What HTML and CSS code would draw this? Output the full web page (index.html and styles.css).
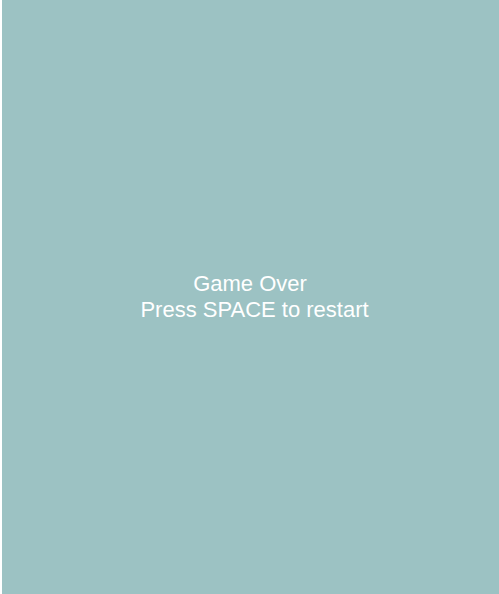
FILE: index.html
```html
<!DOCTYPE html>
<html>
<head>
<meta charset="utf-8">
<link rel="stylesheet" href="styles.css">
</head>
<body>
<div class="game">
  <div class="message">
    <div class="line line-title">Game Over</div>
    <div class="line">Press SPACE to restart</div>
  </div>
</div>
</body>
</html>
```
FILE: styles.css
```css
html, body {
  margin: 0;
  padding: 0;
  background: #ffffff;
  overflow: hidden;
}
.game {
  margin-left: 2px;
  width: 497px;
  height: 594px;
  background: #9cc2c3;
  box-sizing: border-box;
  padding-top: 271px;
  padding-left: 8px;
  font-family: "Liberation Sans", Arial, sans-serif;
  font-size: 22px;
  line-height: 26px;
  color: #ffffff;
}
.message {
  display: flex;
  flex-direction: column;
  align-items: center;
}
.line {
  white-space: nowrap;
}
.line-title {
  padding-right: 9px;
}
```
